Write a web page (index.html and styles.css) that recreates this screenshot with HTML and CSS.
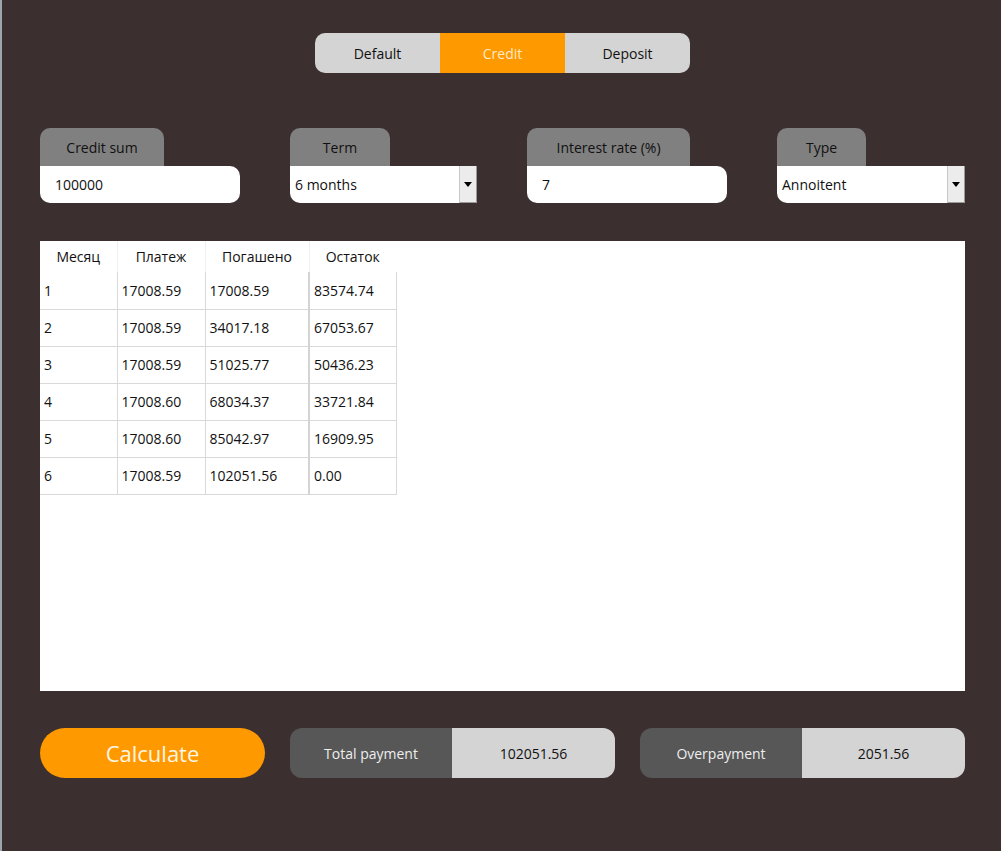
FILE: index.html
```html
<!DOCTYPE html>
<html lang="ru">
<head>
<meta charset="utf-8">
<title>Credit calculator</title>
<link rel="stylesheet" href="styles.css">
</head>
<body>
<div class="app">
  <div class="seg-wrap">
    <div class="seg">
      <div class="seg-item">Default</div>
      <div class="seg-item active">Credit</div>
      <div class="seg-item">Deposit</div>
    </div>
  </div>

  <div class="fields">
    <div class="field f-sum">
      <div class="tab tab-sum">Credit sum</div>
      <div class="input">100000</div>
    </div>
    <div class="field f-term">
      <div class="tab tab-term">Term</div>
      <div class="select">
        <div class="select-val">6 months</div>
        <div class="select-btn"><span class="tri"></span></div>
      </div>
    </div>
    <div class="field f-rate">
      <div class="tab tab-rate">Interest rate (%)</div>
      <div class="input">7</div>
    </div>
    <div class="field f-type">
      <div class="tab tab-type">Type</div>
      <div class="select">
        <div class="select-val">Annoitent</div>
        <div class="select-btn"><span class="tri"></span></div>
      </div>
    </div>
  </div>

  <div class="table-box">
    <table class="grid">
      <thead>
        <tr><th class="c1">Месяц</th><th class="c2">Платеж</th><th class="c3">Погашено</th><th class="c4">Остаток</th></tr>
      </thead>
      <tbody>
        <tr><td>1</td><td>17008.59</td><td class="c3">17008.59</td><td>83574.74</td></tr>
        <tr><td>2</td><td>17008.59</td><td class="c3">34017.18</td><td>67053.67</td></tr>
        <tr><td>3</td><td>17008.59</td><td class="c3">51025.77</td><td>50436.23</td></tr>
        <tr><td>4</td><td>17008.60</td><td class="c3">68034.37</td><td>33721.84</td></tr>
        <tr><td>5</td><td>17008.60</td><td class="c3">85042.97</td><td>16909.95</td></tr>
        <tr><td>6</td><td>17008.59</td><td class="c3">102051.56</td><td>0.00</td></tr>
      </tbody>
    </table>
  </div>

  <div class="bottom">
    <button class="calc">Calculate</button>
    <div class="result">
      <div class="res-label">Total payment</div>
      <div class="res-val">102051.56</div>
    </div>
    <div class="result">
      <div class="res-label">Overpayment</div>
      <div class="res-val">2051.56</div>
    </div>
  </div>
</div>
</body>
</html>
```

FILE: styles.css
```css
* { box-sizing: border-box; }

html, body {
  margin: 0;
  padding: 0;
  background: #3c2f2f;
}

body {
  font-family: "Open Sans", "Noto Sans", sans-serif;
  font-size: 14px;
  color: #111;
}

.app {
  width: 1001px;
  height: 851px;
  border-left: 2px solid #9aa6ab;
  padding: 33px 36px 0 38px;
  display: flex;
  flex-direction: column;
}

/* segmented control */
.seg-wrap {
  display: flex;
  justify-content: center;
}
.seg {
  display: flex;
  width: 375px;
  height: 40px;
  border-radius: 10px;
  overflow: hidden;
  background: #d4d4d4;
}
.seg-item {
  flex: 1;
  display: flex;
  align-items: center;
  justify-content: center;
  padding-top: 1px;
  font-size: 14px;
  color: #111;
}
.seg-item.active {
  background: #ff9900;
  color: #fde9c6;
}

/* fields */
.fields {
  display: flex;
  gap: 50px;
  margin-top: 55px;
}
.field {
  display: flex;
  flex-direction: column;
  align-items: flex-start;
}
.f-sum { width: 200px; }
.f-term { width: 187px; }
.f-rate { width: 200px; }
.f-type { width: 188px; }

.tab {
  height: 38px;
  background: #808080;
  border-radius: 10px 10px 0 0;
  display: flex;
  align-items: center;
  justify-content: center;
  color: #111;
  font-size: 14px;
}
.tab-sum { width: 124px; }
.tab-term { width: 100px; }
.tab-rate { width: 163px; }
.tab-type { width: 89px; }

.input {
  width: 100%;
  height: 37px;
  background: #fff;
  border-radius: 0 10px 10px 10px;
  display: flex;
  align-items: center;
  padding-left: 15px;
  font-size: 14px;
}

.select {
  width: 100%;
  height: 37px;
  display: flex;
}
.select-val {
  flex: 1;
  background: #fff;
  border-radius: 0 0 0 10px;
  display: flex;
  align-items: center;
  padding-left: 5px;
  font-size: 14px;
}
.select-btn {
  width: 18px;
  background: #ececec;
  border-left: 1px solid #c9c9c9;
  border-right: 1px solid #9a9a9a;
  border-bottom: 1px solid #9a9a9a;
  display: flex;
  align-items: center;
  justify-content: center;
}
.tri {
  width: 0;
  height: 0;
  border-left: 4px solid transparent;
  border-right: 4px solid transparent;
  border-top: 5px solid #000;
}

/* table */
.table-box {
  margin-top: 38px;
  height: 450px;
  background: #fff;
}
.grid {
  border-collapse: collapse;
  font-size: 14px;
}
.grid th {
  height: 31px;
  font-weight: normal;
  text-align: center;
  padding: 0;
  border-right: 1px solid #efefef;
}
.grid th.c4 { border-right: none; }
.c1 { width: 77px; }
.c2 { width: 88px; }
.c3 { width: 104px; }
.c4 { width: 87px; }
.grid td {
  height: 37px;
  padding: 0 4px;
  border: 1px solid #d9d9d9;
  border-top: none;
  text-align: left;
}
.grid tbody tr td:first-child { border-left: none; }
.grid tbody tr:first-child td { border-top: none; }
.grid td.c3 { border-right: 2px solid #d4d4d4; }

/* bottom */
.bottom {
  display: flex;
  gap: 25px;
  margin-top: 37px;
  height: 50px;
}
.calc {
  width: 225px;
  height: 50px;
  border: none;
  border-radius: 25px;
  background: #ff9900;
  color: #fff6e6;
  font-family: "Open Sans", "Noto Sans", sans-serif;
  font-size: 22px;
  padding: 0;
}
.result {
  width: 325px;
  height: 50px;
  display: flex;
  border-radius: 12px;
  overflow: hidden;
}
.res-label {
  width: 162px;
  background: #575757;
  color: #eee;
  display: flex;
  align-items: center;
  justify-content: center;
  font-size: 14px;
}
.res-val {
  flex: 1;
  background: #d4d4d4;
  color: #111;
  display: flex;
  align-items: center;
  justify-content: center;
  font-size: 14px;
}
```
